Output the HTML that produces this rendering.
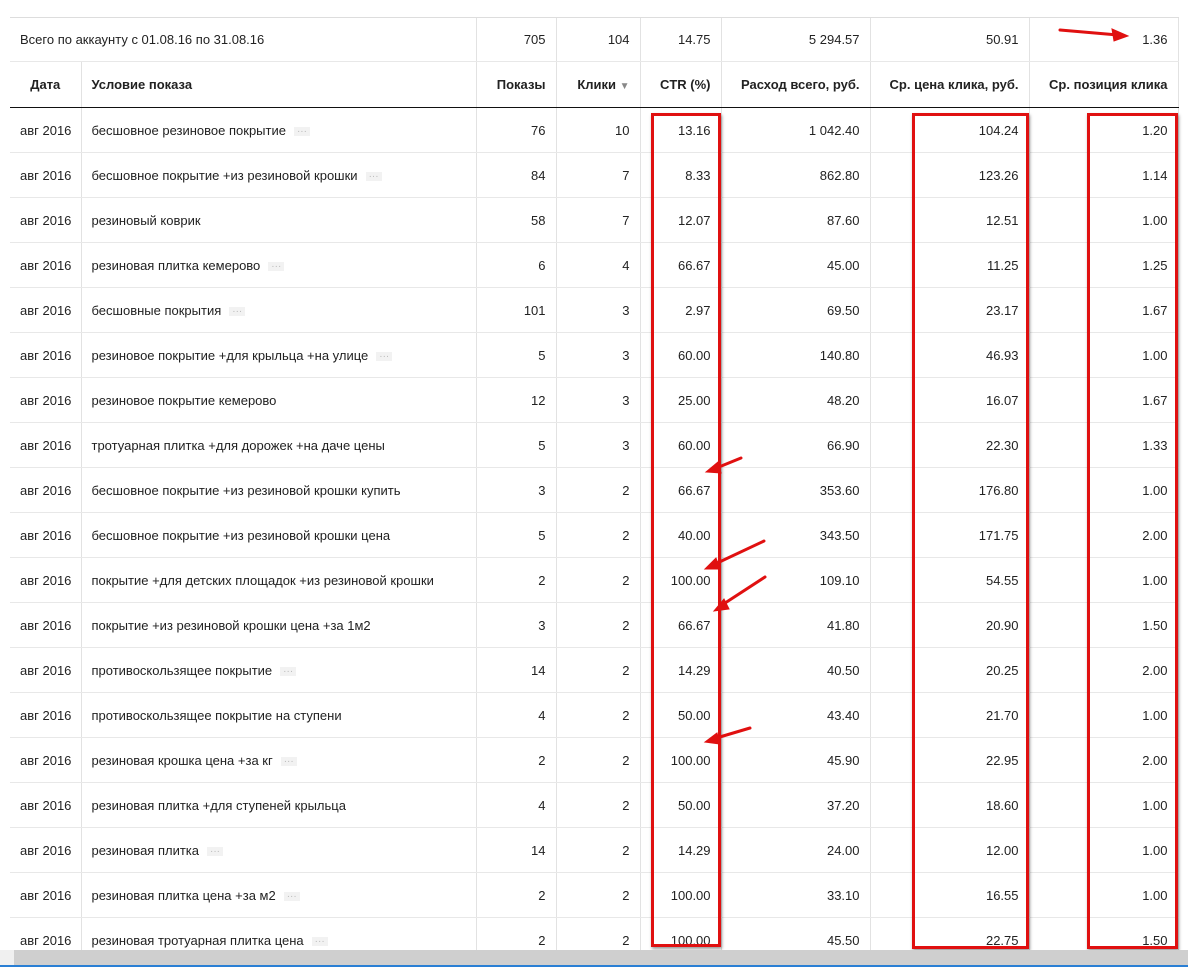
<!DOCTYPE html>
<html><head><meta charset="utf-8"><style>
body{margin:0;width:1188px;height:967px;background:#fff;font-family:"Liberation Sans",Arial,sans-serif;font-size:13px;color:#222;overflow:hidden;position:relative}
table{position:absolute;left:10px;top:17px;border-collapse:collapse;table-layout:fixed;width:1168px;border-right:1px solid #e2e2e2}
td,th{border-left:1px solid #e2e2e2;border-bottom:1px solid #e8e8e8;padding:0 10px;height:44px;white-space:nowrap;text-align:right;font-weight:normal}
td:first-child,th:first-child{border-left:none}
tr.sum td{border-top:1px solid #ddd;height:43px}
th{font-weight:bold;height:45px;border-bottom:1px solid #111;color:#222}
.l{text-align:left}
.d{display:inline-block;margin-left:8px;color:#bbb;font-size:10px;background:#f2f2f2;padding:0 3px;line-height:9px;vertical-align:middle}
.box{position:absolute;border:3px solid #e01010;box-shadow:1px 2px 3px rgba(0,0,0,.4)}
.sb{position:absolute;left:0;top:950px;width:1188px;height:15px;background:#cfcfcf}
.sb:before{content:"";position:absolute;left:0;top:0;width:14px;height:15px;background:#f0f0f0}
.bl{position:absolute;left:0;top:965px;width:1188px;height:2px;background:#2a7fd4}
</style></head><body>
<table>
<colgroup><col style="width:71px"><col style="width:395px"><col style="width:80px"><col style="width:84px"><col style="width:81px"><col style="width:149px"><col style="width:159px"><col style="width:149px"></colgroup>
<tr class="sum"><td class="l" colspan="2">Всего по аккаунту с 01.08.16 по 31.08.16</td><td>705</td><td>104</td><td>14.75</td><td>5 294.57</td><td>50.91</td><td>1.36</td></tr>
<tr><th class="l" style="text-align:center">Дата</th><th class="l">Условие показа</th><th>Показы</th><th>Клики <span style="color:#888;font-size:10px">▼</span></th><th>CTR (%)</th><th>Расход всего, руб.</th><th>Ср. цена клика, руб.</th><th>Ср. позиция клика</th></tr>
<tr><td class="l">авг 2016</td><td class="l">бесшовное резиновое покрытие<span class="d">···</span></td><td>76</td><td>10</td><td>13.16</td><td>1 042.40</td><td>104.24</td><td>1.20</td></tr>
<tr><td class="l">авг 2016</td><td class="l">бесшовное покрытие +из резиновой крошки<span class="d">···</span></td><td>84</td><td>7</td><td>8.33</td><td>862.80</td><td>123.26</td><td>1.14</td></tr>
<tr><td class="l">авг 2016</td><td class="l">резиновый коврик</td><td>58</td><td>7</td><td>12.07</td><td>87.60</td><td>12.51</td><td>1.00</td></tr>
<tr><td class="l">авг 2016</td><td class="l">резиновая плитка кемерово<span class="d">···</span></td><td>6</td><td>4</td><td>66.67</td><td>45.00</td><td>11.25</td><td>1.25</td></tr>
<tr><td class="l">авг 2016</td><td class="l">бесшовные покрытия<span class="d">···</span></td><td>101</td><td>3</td><td>2.97</td><td>69.50</td><td>23.17</td><td>1.67</td></tr>
<tr><td class="l">авг 2016</td><td class="l">резиновое покрытие +для крыльца +на улице<span class="d">···</span></td><td>5</td><td>3</td><td>60.00</td><td>140.80</td><td>46.93</td><td>1.00</td></tr>
<tr><td class="l">авг 2016</td><td class="l">резиновое покрытие кемерово</td><td>12</td><td>3</td><td>25.00</td><td>48.20</td><td>16.07</td><td>1.67</td></tr>
<tr><td class="l">авг 2016</td><td class="l">тротуарная плитка +для дорожек +на даче цены</td><td>5</td><td>3</td><td>60.00</td><td>66.90</td><td>22.30</td><td>1.33</td></tr>
<tr><td class="l">авг 2016</td><td class="l">бесшовное покрытие +из резиновой крошки купить</td><td>3</td><td>2</td><td>66.67</td><td>353.60</td><td>176.80</td><td>1.00</td></tr>
<tr><td class="l">авг 2016</td><td class="l">бесшовное покрытие +из резиновой крошки цена</td><td>5</td><td>2</td><td>40.00</td><td>343.50</td><td>171.75</td><td>2.00</td></tr>
<tr><td class="l">авг 2016</td><td class="l">покрытие +для детских площадок +из резиновой крошки</td><td>2</td><td>2</td><td>100.00</td><td>109.10</td><td>54.55</td><td>1.00</td></tr>
<tr><td class="l">авг 2016</td><td class="l">покрытие +из резиновой крошки цена +за 1м2</td><td>3</td><td>2</td><td>66.67</td><td>41.80</td><td>20.90</td><td>1.50</td></tr>
<tr><td class="l">авг 2016</td><td class="l">противоскользящее покрытие<span class="d">···</span></td><td>14</td><td>2</td><td>14.29</td><td>40.50</td><td>20.25</td><td>2.00</td></tr>
<tr><td class="l">авг 2016</td><td class="l">противоскользящее покрытие на ступени</td><td>4</td><td>2</td><td>50.00</td><td>43.40</td><td>21.70</td><td>1.00</td></tr>
<tr><td class="l">авг 2016</td><td class="l">резиновая крошка цена +за кг<span class="d">···</span></td><td>2</td><td>2</td><td>100.00</td><td>45.90</td><td>22.95</td><td>2.00</td></tr>
<tr><td class="l">авг 2016</td><td class="l">резиновая плитка +для ступеней крыльца</td><td>4</td><td>2</td><td>50.00</td><td>37.20</td><td>18.60</td><td>1.00</td></tr>
<tr><td class="l">авг 2016</td><td class="l">резиновая плитка<span class="d">···</span></td><td>14</td><td>2</td><td>14.29</td><td>24.00</td><td>12.00</td><td>1.00</td></tr>
<tr><td class="l">авг 2016</td><td class="l">резиновая плитка цена +за м2<span class="d">···</span></td><td>2</td><td>2</td><td>100.00</td><td>33.10</td><td>16.55</td><td>1.00</td></tr>
<tr><td class="l">авг 2016</td><td class="l">резиновая тротуарная плитка цена<span class="d">···</span></td><td>2</td><td>2</td><td>100.00</td><td>45.50</td><td>22.75</td><td>1.50</td></tr>
</table>
<div class="box" style="left:651px;top:113px;width:64px;height:828px"></div>
<div class="box" style="left:912px;top:113px;width:111px;height:830px"></div>
<div class="box" style="left:1087px;top:113px;width:85px;height:830px"></div>
<svg style="position:absolute;left:0;top:0" width="1188" height="967">
<g stroke="#e01010" stroke-width="3" fill="#e01010" stroke-linecap="round">
<line x1="1060" y1="30" x2="1118" y2="35"/><polygon points="1128,36 1112,29 1114,41" stroke-width="1"/>
<line x1="741" y1="458" x2="714" y2="469"/><polygon points="706,472 718,462 721,473" stroke-width="1"/>
<line x1="764" y1="541" x2="713" y2="565"/><polygon points="705,569 716,558 720,569" stroke-width="1"/>
<line x1="765" y1="577" x2="722" y2="605"/><polygon points="714,611 724,599 729,609" stroke-width="1"/>
<line x1="750" y1="728" x2="713" y2="739"/><polygon points="705,742 717,733 720,744" stroke-width="1"/>
</g></svg>
<div class="sb"></div><div class="bl"></div>
</body></html>
